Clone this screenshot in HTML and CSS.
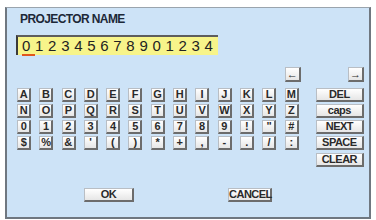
FILE: index.html
```html
<!DOCTYPE html>
<html lang="en">
<head>
    <meta charset="UTF-8">
    <title>Projector name</title>
    <link rel="stylesheet" href="styles.css">
</head>
<body>
    <div class="panel">
        <div class="title">PROJECTOR NAME</div>
        <div class="name-field"><span class="cursor">0</span>12345678901234</div>

        <div class="keyboard">
            <div class="arrows">
                <button class="key">&larr;</button>
                <button class="key">&rarr;</button>
            </div>

            <button class="key">A</button><button class="key">B</button><button class="key">C</button><button class="key">D</button><button class="key">E</button><button class="key">F</button><button class="key">G</button><button class="key">H</button><button class="key">I</button><button class="key">J</button><button class="key">K</button><button class="key">L</button><button class="key">M</button>
            <button class="key wide">DEL</button>

            <button class="key">N</button><button class="key">O</button><button class="key">P</button><button class="key">Q</button><button class="key">R</button><button class="key">S</button><button class="key">T</button><button class="key">U</button><button class="key">V</button><button class="key">W</button><button class="key">X</button><button class="key">Y</button><button class="key">Z</button>
            <button class="key wide">caps</button>

            <button class="key">0</button><button class="key">1</button><button class="key">2</button><button class="key">3</button><button class="key">4</button><button class="key">5</button><button class="key">6</button><button class="key">7</button><button class="key">8</button><button class="key">9</button><button class="key">!</button><button class="key">"</button><button class="key">#</button>
            <button class="key wide">NEXT</button>

            <button class="key">$</button><button class="key">%</button><button class="key">&amp;</button><button class="key">'</button><button class="key">(</button><button class="key">)</button><button class="key">*</button><button class="key">+</button><button class="key">,</button><button class="key">-</button><button class="key">.</button><button class="key">/</button><button class="key">:</button>
            <button class="key wide">SPACE</button>

            <button class="key wide clear">CLEAR</button>
        </div>

        <div class="actions">
            <button class="key action ok">OK</button>
            <button class="key action cancel">CANCEL</button>
        </div>
    </div>
</body>
</html>
```

FILE: styles.css
```css
body {
    margin: 0;
    background-color: #fff;
    font-family: "Liberation Sans", Arial, sans-serif;
}

.panel {
    margin: 7px 5px 0 5px;
    height: 205px;
    padding: 4px 0 0 9px;
    background-color: #cde3f7;
    border-top: 1px solid #9aa4ad;
    border-left: 2px solid #6f7780;
    border-right: 2px solid #6f7780;
    border-bottom: 2px solid #6f7780;
}

.title {
    padding-left: 4px;
    font-size: 12px;
    font-weight: bold;
    letter-spacing: -0.6px;
    color: #1c2838;
    height: 14px;
    line-height: 14px;
}

.name-field {
    margin-top: 9px;
    width: 196px;
    height: 18px;
    padding-left: 4px;
    background-color: #f7f48a;
    border-top: 2px solid #5d5d5d;
    border-left: 2px solid #3a3a3a;
    font-size: 15px;
    line-height: 18px;
    letter-spacing: 4.7px;
    color: #222;
}

.cursor {
    border-bottom: 2px solid #e0561c;
}

.keyboard {
    margin-top: 17px;
    margin-left: 1px;
    display: grid;
    grid-template-columns: repeat(13, 14px) 48px;
    grid-auto-rows: 14px;
    column-gap: 8.3px;
    row-gap: 2px;
}

.arrows {
    grid-column: 13 / 15;
    display: flex;
    justify-content: space-between;
    margin: -5px -9px 4px 0;
}

.key {
    box-sizing: border-box;
    height: 14px;
    min-width: 14px;
    padding: 0;
    margin: 0;
    background: linear-gradient(#ffffff, #e6e6e6);
    border: 1px solid #b9bec4;
    border-right: 2px solid #6c6c6c;
    border-bottom: 2px solid #6c6c6c;
    font-family: "Liberation Sans", Arial, sans-serif;
    font-size: 11px;
    font-weight: bold;
    letter-spacing: -0.5px;
    line-height: 11px;
    color: #2a2a2a;
}

.wide {
    grid-column: 14;
    width: 48px;
    margin-left: 9px;
}

.clear {
    grid-column: 14;
    margin-top: 1px;
}

.arrows .key {
    width: 16px;
    height: 15px;
}

.actions {
    display: flex;
    margin-top: 22px;
    padding-left: 68px;
}

.action {
    height: 14px;
}

.ok {
    width: 50px;
}

.cancel {
    width: 44px;
    margin-left: 94px;
}
```
